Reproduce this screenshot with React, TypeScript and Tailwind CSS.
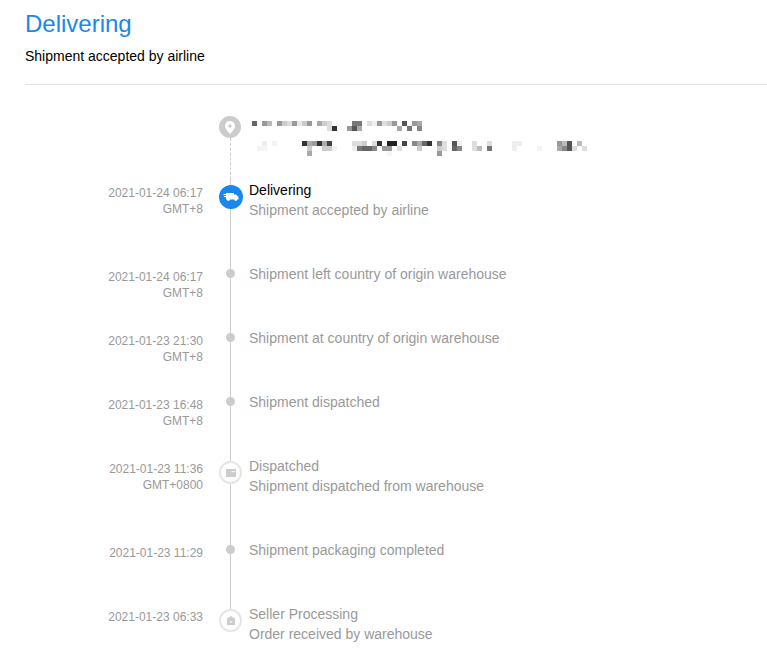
const font = { fontFamily: '"Liberation Sans", Arial, sans-serif' };

type Step = {
  date: string;
  zone: string;
  title?: string;
  detail: string;
  icon: 'truck' | 'dot' | 'parcel' | 'house';
};

const steps: Step[] = [
  { date: '2021-01-24 06:17', zone: 'GMT+8', title: 'Delivering', detail: 'Shipment accepted by airline', icon: 'truck' },
  { date: '2021-01-24 06:17', zone: 'GMT+8', detail: 'Shipment left country of origin warehouse', icon: 'dot' },
  { date: '2021-01-23 21:30', zone: 'GMT+8', detail: 'Shipment at country of origin warehouse', icon: 'dot' },
  { date: '2021-01-23 16:48', zone: 'GMT+8', detail: 'Shipment dispatched', icon: 'dot' },
  { date: '2021-01-23 11:36', zone: 'GMT+0800', title: 'Dispatched', detail: 'Shipment dispatched from warehouse', icon: 'parcel' },
  { date: '2021-01-23 11:29', zone: '', detail: 'Shipment packaging completed', icon: 'dot' },
  { date: '2021-01-23 06:33', zone: '', title: 'Seller Processing', detail: 'Order received by warehouse', icon: 'house' },
];

// pixelated address: y of the row, then [cell index, colour] with 5px cells
const mosaic: [number, [number, string][]][] = [
  [0, [[0, '#666'], [2, '#999'], [3, '#bbb'], [5, '#999'], [6, '#ccc'], [7, '#ddd'], [8, '#999'], [9, '#e8e8e8'], [10, '#ccc'], [11, '#999'], [13, '#aaa'], [14, '#ccc'], [15, '#ddd'], [20, '#777'], [21, '#777'], [23, '#ddd'], [24, '#eee'], [25, '#999'], [26, '#ddd'], [27, '#ccc'], [28, '#999'], [30, '#555'], [32, '#999'], [33, '#aaa']]],
  [5, [[15, '#ddd'], [16, '#333'], [19, '#999'], [20, '#555'], [21, '#aaa'], [29, '#aaa'], [31, '#777'], [33, '#888']]],
  [20, [[2, '#eee'], [4, '#f3f3f3'], [10, '#333'], [11, '#aaa'], [12, '#999'], [13, '#333'], [14, '#aaa'], [15, '#444'], [20, '#ddd'], [21, '#ddd'], [22, '#ccc'], [24, '#ddd'], [25, '#333'], [27, '#222'], [28, '#222'], [30, '#444'], [32, '#888'], [33, '#aaa'], [34, '#666'], [35, '#333'], [37, '#888'], [38, '#ddd'], [40, '#555'], [41, '#f0f0f0'], [44, '#ddd'], [47, '#ddd'], [52, '#eee'], [53, '#eee'], [61, '#999'], [62, '#bbb'], [63, '#555'], [65, '#bbb']]],
  [25, [[1, '#f3f3f3'], [2, '#f5f5f5'], [11, '#ccc'], [14, '#ccc'], [15, '#ccc'], [16, '#f3f3f3'], [20, '#eee'], [21, '#777'], [22, '#666'], [23, '#666'], [24, '#888'], [26, '#999'], [27, '#999'], [29, '#ddd'], [33, '#ccc'], [37, '#ccc'], [38, '#ddd'], [40, '#666'], [41, '#888'], [44, '#ddd'], [45, '#bbb'], [47, '#777'], [52, '#eee'], [57, '#f3f3f3'], [61, '#aaa'], [62, '#888'], [63, '#555'], [64, '#ddd'], [66, '#ddd']]],
  [30, [[11, '#aaa'], [27, '#f5f5f5'], [37, '#999']]],
];

function StepIcon({ icon }: { icon: Step['icon'] }) {
  if (icon === 'truck') {
    return (
      <span className="ml-[1px] flex size-6 shrink-0 items-center justify-center rounded-full bg-[#1a87ee]">
        <svg width="16" height="10" viewBox="0 0 16 10" fill="#fff">
          <path d="M3 1h8v1.500h2l2.500 2.500v2.500h-1.300a1.400 1.400 0 0 1-2.800 0H6.800a1.400 1.400 0 0 1-2.800 0H3z" />
          <path d="M0.500 2h3v1h-3zM1 4h3v1H1z" />
        </svg>
      </span>
    );
  }
  if (icon === 'dot') {
    return <span className="size-[9px] shrink-0 rounded-full bg-[#cccccc]" />;
  }
  return (
    <span className="ml-[1px] flex size-[23px] shrink-0 items-center justify-center rounded-full border-2 border-[#e6e6e6] bg-white">
      {icon === 'parcel' ? (
        <svg width="10" height="8" viewBox="0 0 10 8" fill="#cccccc">
          <path d="M0 0h10v8H0z" />
          <path d="M5.500 2h3.500v1.200H5.500z" fill="#f4f4f4" />
        </svg>
      ) : (
        <svg width="8" height="9" viewBox="0 0 8 9" fill="#cccccc">
          <path d="M4 0l4 2.800V9H0V2.800z" />
          <path d="M2.800 5h2.400v1.500H2.800z" fill="#f4f4f4" />
        </svg>
      )}
    </span>
  );
}

function MosaicAddress() {
  return (
    <svg width="340" height="35" viewBox="0 0 340 35" aria-hidden="true" className="mt-[5px] ml-[3px] shrink-0">
      {mosaic.map(([y, cells]) =>
        cells.map(([k, fill]) => <rect key={`${y}-${k}`} x={k * 5} y={y} width="5" height="5" fill={fill} />),
      )}
    </svg>
  );
}

export default function App() {
  return (
    <div className="h-[657px] overflow-hidden bg-white pl-[25px] text-[14px] leading-5" style={font}>
      <div className="border-b border-[#dddddd] pt-[7px] pb-[18px]">
        <h1 className="text-[24px] leading-[33px] font-normal text-[#1a87ee]">Delivering</h1>
        <p className="mt-[6px] text-black">Shipment accepted by airline</p>
      </div>

      <div className="flex h-[95px] pt-[31px]">
        <div className="w-[186px] shrink-0" />
        <div className="flex w-[38px] shrink-0 flex-col items-center">
          <span className="flex size-[22px] shrink-0 items-center justify-center rounded-full bg-[#cccccc]">
            <svg width="10" height="13" viewBox="0 0 10 13">
              <path d="M5 0a5 5 0 0 1 5 5c0 3-5 8-5 8S0 8 0 5a5 5 0 0 1 5-5z" fill="#fff" />
              <circle cx="5" cy="5" r="1.800" fill="#cccccc" />
            </svg>
          </span>
          <span className="flex-1 border-l border-dashed border-[#cccccc]" />
        </div>
        <MosaicAddress />
      </div>

      {steps.map((step, i) => (
        <div key={i} className="flex">
          <div className="w-[178px] shrink-0 pt-[5px] text-right text-[12px] leading-[16px] text-[#999999]">
            <div>{step.date}</div>
            {step.zone && <div>{step.zone}</div>}
          </div>
          <div className="ml-[8px] flex w-[38px] shrink-0 flex-col items-center">
            <span
              className={
                i === 0
                  ? 'h-[5px] border-l border-dashed border-[#cccccc]'
                  : 'h-[5px] w-px bg-[#cccccc]'
              }
            />
            <StepIcon icon={step.icon} />
            {i < steps.length - 1 && <span className="w-px flex-1 bg-[#cccccc]" />}
          </div>
          <div className="pb-[44px] text-[#999999]">
            {step.title && <div className={i === 0 ? 'text-black' : ''}>{step.title}</div>}
            <div>{step.detail}</div>
          </div>
        </div>
      ))}
    </div>
  );
}
